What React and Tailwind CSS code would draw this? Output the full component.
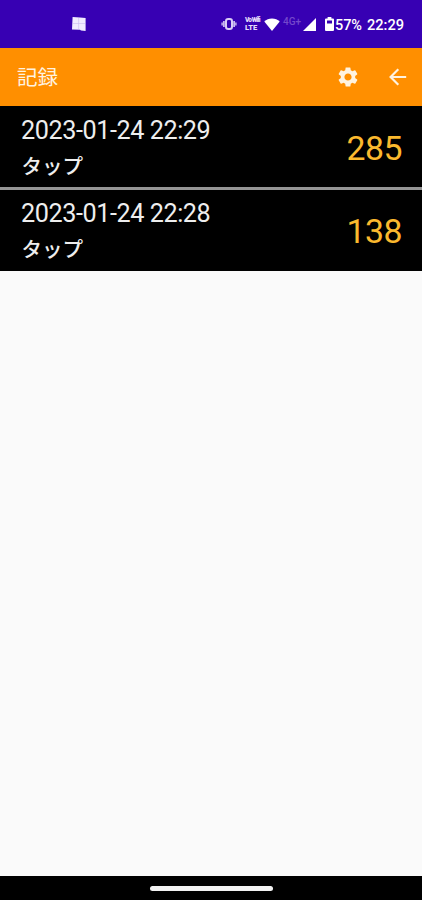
import React from 'react';

const records = [
  { id: 2, date: '2023-01-24 22:29', mode: 'タップ', score: 285 },
  { id: 1, date: '2023-01-24 22:28', mode: 'タップ', score: 138 },
];

const StatusBar = () => (
  <div className="flex h-12 items-center bg-[#3700b3] pl-[71px] pr-[17px] text-white">
    <svg className="h-4 w-4" viewBox="0 0 16 16">
      <path fill="#f1ebff" d="M1.6 1 9 1.4l5.6.5v13l-4.600-.3-1-.8-8-.3z" />
      <path stroke="#cbbaf0" strokeWidth=".6" d="M7.6 2v11M2 7.500h12" />
    </svg>

    <div className="ml-auto flex items-center">
      <svg className="mr-[2px] h-[14px] w-4" viewBox="0 0 16 14" fill="none" stroke="#d9ccf5">
        <rect x="5" y="2" width="6" height="10" rx="2.2" strokeWidth="2" />
        <path d="M2.9 4v6M13.1 4v6" strokeWidth="1.6" />
        <path d="M1.1 5.600v2.800M14.9 5.600v2.800" strokeWidth="1.3" />
      </svg>
      <div className="ml-[6px] flex w-[15px] flex-col whitespace-nowrap font-black text-[#e5dcfa]">
        <span className="text-[6.5px] leading-[7px] tracking-[-0.9px]">Vo Wifi</span>
        <span className="text-[7.5px] leading-[7px]">LTE</span>
      </div>
      <svg className="ml-[4px] h-[13px] w-4" viewBox="0 0 16 13" fill="#fff">
        <path d="M8 13 .3 3.6C2.3 1.500 5 .4 8 .4s5.700 1.100 7.700 3.200z" />
      </svg>
      <span className="-mt-[4px] ml-[3px] w-[18px] whitespace-nowrap text-[10px] leading-3 font-medium text-[#7448cb]">4G+</span>
      <svg className="ml-[2px] h-[13px] w-[13px]" viewBox="0 0 13 13" fill="#fff">
        <path d="M13 0v13H0z" />
      </svg>
      <svg className="ml-[9px] h-[14px] w-[9px]" viewBox="0 0 9 14">
        <path fill="#fff" d="M2.6 0h3.800v1.500H8q1 0 1 1V13q0 1-1 1H1q-1 0-1-1V2.500q0-1 1-1h1.600z" />
        <path fill="#3700b3" d="M2 3.500h5v3H2z" />
      </svg>
      <span className="mt-[3px] ml-px w-[28px] whitespace-nowrap text-[14.5px] leading-4 font-medium tracking-[-0.1px]">57%</span>
      <span className="mt-[2px] ml-[4px] w-[38px] whitespace-nowrap text-[14.6px] leading-4 font-medium">22:29</span>
    </div>
  </div>
);

const AppBar = () => (
  <header className="flex h-[58px] items-center bg-[#ff8f00] pr-[14px] pl-[17px] text-[#fff3e0]">
    <h1 className="mt-[2px] text-[20.5px] leading-6">記録</h1>
    <button className="ml-auto" title="設定">
      <svg className="h-6 w-6" viewBox="0 0 24 24" fill="currentColor">
        <path d="M19.140 12.940c.04-.3.060-.61.060-.94 0-.32-.02-.64-.07-.94l2.030-1.580a.49.49 0 0 0 .12-.61l-1.920-3.320a.488.488 0 0 0-.59-.22l-2.390.96c-.5-.38-1.030-.7-1.620-.94l-.36-2.540a.484.484 0 0 0-.48-.41h-3.840c-.24 0-.43.17-.47.41l-.36 2.540c-.59.24-1.130.57-1.620.94l-2.390-.96c-.22-.08-.47 0-.59.22L2.740 8.870c-.12.21-.08.47.12.61l2.030 1.580c-.05.3-.09.63-.09.94s.02.64.07.94l-2.030 1.580a.49.49 0 0 0-.12.61l1.920 3.320c.12.22.37.29.59.22l2.390-.96c.5.38 1.030.7 1.620.94l.36 2.540c.05.24.24.41.48.41h3.840c.24 0 .44-.17.47-.41l.36-2.540c.59-.24 1.130-.56 1.620-.94l2.390.96c.22.08.47 0 .59-.22l1.920-3.320c.12-.22.07-.47-.12-.61l-2.010-1.580zM12 15.600c-1.980 0-3.600-1.620-3.600-3.600s1.620-3.600 3.600-3.600 3.600 1.620 3.600 3.600-1.620 3.600-3.600 3.600z" />
      </svg>
    </button>
    <button className="ml-[28px]" title="戻る">
      <svg className="h-5 w-5" viewBox="0 0 20 20" fill="none" stroke="currentColor" strokeWidth="2.2">
        <path d="M18.200 10H3M10.300 2.300 2.600 10l7.700 7.700" />
      </svg>
    </button>
  </header>
);

const RecordRow = ({ date, mode, score }) => (
  <div className="flex h-full items-center justify-between bg-black pr-[20px] pl-[21px]">
    <div className="mt-[4px] flex flex-col text-[#eeeeee]">
      <span className="text-[25.2px] leading-[34px] tracking-[-0.43px]">{date}</span>
      <span className="mt-px ml-[0.5px] text-[20.5px] leading-[36px] font-medium">{mode}</span>
    </div>
    <span className="mt-[2px] text-[33.8px] leading-10 tracking-[-0.5px] text-[#fbb92e]">{score}</span>
  </div>
);

const App = () => {
  return (
    <div className="flex h-[900px] w-[422px] flex-col overflow-hidden bg-[#fafafa] font-['Roboto','Noto_Sans_CJK_JP',sans-serif]">
      <StatusBar />
      <AppBar />
      <ul className="flex-1 divide-y-[3px] divide-[#959595]">
        {records.map((record) => (
          <li key={record.id} className="box-content h-[81px] bg-black first:h-[79px] first:pt-[2px]">
            <RecordRow {...record} />
          </li>
        ))}
      </ul>
      <div className="flex h-6 items-center justify-center bg-black">
        <div className="h-[5px] w-[123px] rounded-full bg-[#f2f2f2]" />
      </div>
    </div>
  );
};

export default App;
